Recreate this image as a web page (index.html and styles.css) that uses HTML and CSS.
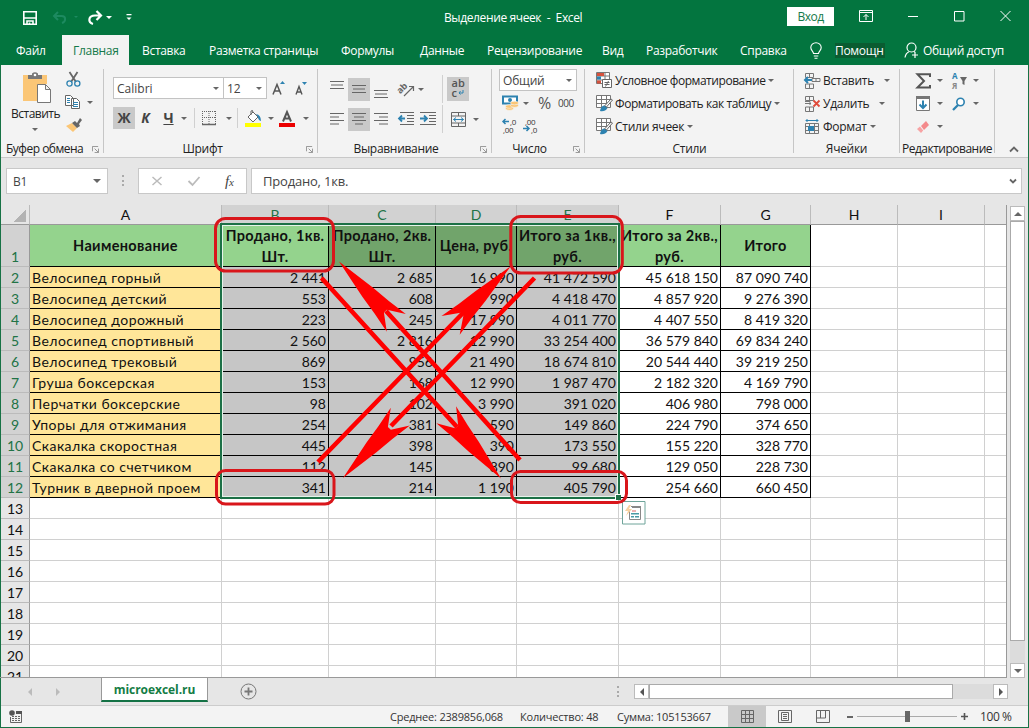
FILE: index.html
```html
<!DOCTYPE html>
<html lang="ru">
<head>
<meta charset="utf-8">
<title>Выделение ячеек - Excel</title>
<link rel="stylesheet" href="styles.css">
</head>
<body>
<div class="window">
  <header class="titlebar">
    <svg class="save" width="16" height="16" viewBox="0 0 16 16" fill="none" stroke="#fff" stroke-width="1.6"><path d="M1.800 1.800h12.400v12.400H1.800zM1.800 8h12.400M5 14v-3h6v3M7.500 14v-1.500"/></svg>
    <svg width="16" height="16" viewBox="0 0 16 16" fill="none" stroke="#1d8a60" stroke-width="2"><path d="M6 2L2 6l4 4M3 6h6.500c5 0 4.500 5.500.5 7"/></svg>
    <i class="caret dim"></i>
    <svg width="17" height="16" viewBox="0 0 17 16" fill="none" stroke="#fff" stroke-width="2.200"><path d="M9.500 1L14 5.500 9.500 10M14 5.500H8C1 5.500.8 12.500 6 14"/></svg>
    <i class="caret white"></i>
    <svg width="8" height="8" viewBox="0 0 8 8" fill="#fff"><path d="M.5 0h5v1.200h-5zM.5 3.500h5L3 6z"/></svg>
    <span class="title">Выделение ячеек&nbsp; -&nbsp; Excel</span>
    <span class="signin">Вход</span>
    <svg width="14" height="12" viewBox="0 0 14 12" fill="none" stroke="#fff"><path d="M.5.5h13v11H.5zM.5 2.500h13M7 10V4.500M4.500 7L7 4.500 9.500 7"/></svg>
    <svg width="10" height="12" viewBox="0 0 10 12" stroke="#fff"><path d="M0 6.500h10"/></svg>
    <svg width="11" height="12" viewBox="0 0 11 12" fill="none" stroke="#fff"><path d="M.5 1.500h9.500V11H.5z"/></svg>
    <svg width="11" height="12" viewBox="0 0 11 12" stroke="#fff"><path d="M.5 1l10 10M10.500 1l-10 10"/></svg>
  </header>

  <nav class="tabs">
    <span>Файл</span><span class="active">Главная</span><span>Вставка</span><span>Разметка страницы</span><span>Формулы</span><span>Данные</span><span>Рецензирование</span><span>Вид</span><span>Разработчик</span><span>Справка</span>
    <svg width="12" height="17" viewBox="0 0 12 17" fill="none" stroke="#fff" stroke-width="1.1"><path d="M3.500 11.500c0-2-2.700-3-2.700-6a5.200 4.800 0 0 1 10.400 0c0 3-2.700 4-2.700 6zM3.800 14h4.500M4.500 16.200h3"/></svg>
    <span class="tell">Помощн</span>
    <svg width="15" height="17" viewBox="0 0 15 17" fill="none" stroke="#fff" stroke-width="1.200"><circle cx="7.500" cy="5.500" r="4.500"/><path d="M1 15.500c.5-3 2-5 4-5.800M10 9.500l1 .8M11 10v6M8 13h6"/></svg>
    <span>Общий доступ</span>
  </nav>

  <section class="ribbon">
    <div class="group clipboard">
      <div class="clip-body">
        <div class="paste">
          <svg width="28" height="31" viewBox="0 0 28 31"><path fill="#fbc676" d="M0 3h5v4h14V3h5v9h-9v17H0z"/><path fill="#777" d="M5 3h4V1.500Q12 -1 15 1.500V3h4v4H5z"/><circle cx="12" cy="3" r="1.300" fill="#fff"/><path fill="#fff" stroke="#777" d="M14.500 12.500h8l5 5v13h-13zM22.500 12.500v5h5"/></svg>
          <span>Вставить</span><i class="caret"></i>
        </div>
        <div class="clip-tools">
          <svg width="15" height="15" viewBox="0 0 15 15" fill="none"><path stroke="#666" stroke-width="1.800" d="M3.500 0L10 10M11.500 0L5 10"/><g stroke="#2d82b0" stroke-width="1.300"><circle cx="3.500" cy="11.500" r="2.600"/><circle cx="11.300" cy="11.500" r="2.600"/></g></svg>
          <div class="copy"><svg width="16" height="15" viewBox="0 0 16 15" fill="#fff" stroke="#666"><path d="M.5.500h5l3 3v7h-8zM6.500 3.500h5l3 3v7h-8z"/><path stroke="#2d82b0" d="M2 3.500h3M2 5.500h3M2 7.500h3M8 7.500h5M8 9.500h5M8 11.500h5"/></svg><i class="caret"></i></div>
          <svg width="16" height="14" viewBox="0 0 16 14"><path fill="#fbc676" d="M0 8l6-3 5 5-4 4z"/><path fill="#666" d="M6 5l3-2 2 2 3-5 2 2-3 4 1 2-3 2z"/></svg>
        </div>
      </div>
      <div class="label tight"><span>Буфер обмена</span><svg class="launch"><use href="#launch"/></svg></div>
    </div>

    <div class="group font">
      <div class="row font-1">
        <div class="combo">Calibri<i class="caret"></i></div><div class="combo size">12<i class="caret"></i></div>
        <svg width="13" height="15" viewBox="0 0 13 15"><path d="M1 13.500L5 3.500l4 10M2.500 10h5" fill="none" stroke="#555" stroke-width="1.500"/><path fill="#2d82b0" d="M8 3h5l-2.500-3z"/></svg>
        <svg width="12" height="15" viewBox="0 0 12 15"><path d="M1 13.500l3-8 3 8M2.200 11h4" fill="none" stroke="#555" stroke-width="1.400"/><path fill="#2d82b0" d="M7 1h5L9.500 4z"/></svg>
      </div>
      <div class="row font-2">
        <b class="on">Ж</b><b><em>К</em></b><b class="under">Ч</b><i class="caret"></i><i class="sep"></i>
        <svg width="14" height="14" viewBox="0 0 14 14" stroke="#666"><path stroke-dasharray="1 1" d="M.5 0v13M13.500 0v13M7 0v13M0 .5h14M0 6.500h14"/><path d="M0 13.500h14" stroke-width="1.500"/></svg><i class="caret"></i><i class="sep"></i>
        <svg width="17" height="17" viewBox="0 0 17 17"><path d="M3 7l5-5 5 5-5 5zM6 5V1q2-2 2 2" fill="#fff" stroke="#666"/><path fill="#2d82b0" d="M11 4q5 1 5 7-3-1-3-4z"/><path fill="#ff0" d="M0 13h16v4H0z"/></svg><i class="caret"></i>
        <svg width="17" height="17" viewBox="0 0 17 17"><path d="M4 11.500L8 2l4 9.500M5.500 8.500h5" fill="none" stroke="#555" stroke-width="2"/><path fill="#ec0000" d="M0 13h16v4H0z"/></svg><i class="caret"></i>
      </div>
      <div class="label"><span>Шрифт</span><svg class="launch"><use href="#launch"/></svg></div>
    </div>

    <div class="group align">
      <div class="row align-1">
        <svg class="up" width="14" height="10"><use href="#l3"/></svg><span class="on"><svg width="14" height="10"><use href="#l3"/></svg></span><svg class="down" width="14" height="10"><use href="#l3"/></svg>
        <svg width="17" height="16" viewBox="0 0 17 16"><text x="0" y="10" transform="rotate(-45 5 9)" class="ab">ab</text><path d="M6 15l9-9M11 5.500h4.500V10" fill="none" stroke="#666" stroke-width="1.200"/></svg><i class="caret"></i><i class="sep tall"></i>
        <svg class="on wrap" width="22" height="24" viewBox="0 0 22 24"><text x="4.500" y="10">ab</text><text x="4.500" y="20">c</text><path d="M16 13v3h-4M13.500 14L12 16l1.500 1.500" fill="none" stroke="#2d82b0"/></svg>
      </div>
      <div class="row align-2">
        <svg width="14" height="12"><use href="#l4"/></svg><span class="on"><svg width="14" height="12" viewBox="0 0 14 12" stroke="#666"><path d="M0 .5h14M2 4h10M0 7.500h14M3 11h8"/></svg></span><svg width="14" height="12" class="mirror"><use href="#l4"/></svg>
        <svg width="16" height="14" viewBox="0 0 16 14"><path d="M2 .5h14M9 3.500h7M9 6.500h7M9 9.500h7M2 12.500h14" stroke="#666"/><path d="M7 6.500H1M4 3.500l-3 3 3 3" fill="none" stroke="#2d82b0" stroke-width="1.800"/></svg>
        <svg width="16" height="14" viewBox="0 0 16 14"><path d="M0 .5h16M9 3.500h7M9 6.500h7M9 9.500h7M0 12.500h16" stroke="#666"/><path d="M0 6.500h6M4 3.500l3 3-3 3" fill="none" stroke="#2d82b0" stroke-width="1.800"/></svg>
        <i class="sep tall"></i>
        <svg width="15" height="15" viewBox="0 0 15 15" fill="none"><path d="M.5.5h14v14H.5zM.5 4h14M.5 11h14M7.500 0v4M7.500 11v4" stroke="#666"/><path d="M2.500 7.500h10M5 5.500l-2.500 2L5 9.500M10 5.500l2.500 2-2.500 2" stroke="#2d82b0"/></svg><i class="caret"></i>
      </div>
      <div class="label"><span>Выравнивание</span><svg class="launch"><use href="#launch"/></svg></div>
    </div>

    <div class="group number">
      <div class="combo">Общий<i class="caret"></i></div>
      <div class="row number-1">
        <svg width="17" height="16" viewBox="0 0 17 16"><path d="M1 1.500h14v7H1z" fill="#fff" stroke="#2d82b0" stroke-width="2"/><circle cx="8" cy="5" r="2" fill="#2d82b0"/><g fill="#fbc676" stroke="#f3f3f3" stroke-width=".6"><ellipse cx="7.500" cy="13.500" rx="4" ry="1.800"/><ellipse cx="7.500" cy="11.500" rx="4" ry="1.800"/><ellipse cx="12.500" cy="10.500" rx="4" ry="1.800"/><ellipse cx="12.500" cy="8" rx="4" ry="1.800"/></g></svg><i class="caret"></i><span class="pct">%</span><span class="zeros">000</span>
      </div>
      <div class="row number-2">
        <svg width="15" height="15" viewBox="0 0 15 15"><path d="M1 3.500h6M3.500 1L1 3.500 3.500 6" fill="none" stroke="#2d82b0" stroke-width="1.500"/><text x="8" y="7" class="dec">,0</text><text x="1" y="15" class="dec">,00</text></svg>
        <svg width="15" height="15" viewBox="0 0 15 15"><path d="M0 10.500h6M3.500 8L6 10.500 3.500 13" fill="none" stroke="#2d82b0" stroke-width="1.500"/><text x="2" y="7" class="dec">,00</text><text x="8" y="15" class="dec">,0</text></svg>
      </div>
      <div class="label"><span>Число</span><svg class="launch"><use href="#launch"/></svg></div>
    </div>

    <div class="group styles">
      <div class="cmd cond"><svg width="17" height="17" viewBox="0 0 17 17"><path fill="#fff" stroke="#777" d="M.5.5h13v11H.5zM.5 4h13M.5 8h13M9 .5v11"/><path fill="#d5513c" d="M1 1h7v3H1zM1 8.500h4v3H1z"/><path fill="#2d82b0" d="M1 4.500h4v3H1z"/><path fill="#fff" stroke="#666" d="M6.500 7.500h9v8h-9zM8.500 10.500h5M8.500 12.500h5M12.500 9l-3 5.500"/></svg><span>Условное форматирование</span><i class="caret"></i></div>
      <div class="cmd table"><svg width="17" height="17"><use href="#tbl"/></svg><span>Форматировать как таблицу</span><i class="caret"></i></div>
      <div class="cmd"><svg width="17" height="17"><use href="#tbl"/></svg><span>Стили ячеек</span><i class="caret"></i></div>
      <div class="label"><span>Стили</span></div>
    </div>

    <div class="group cells">
      <div class="cmd"><svg width="17" height="16" viewBox="0 0 17 16" fill="none" stroke="#777"><path d="M1.500.5h8v4h-8zM5.500.5v4M1.500 11h8v4.500h-8zM5.500 11v4.500M8 5.500h8v3H8zM12 5.500v3"/><path stroke="#2d82b0" stroke-width="2" d="M8 7H1M4 4L1 7l3 3"/></svg><span>Вставить</span><i class="caret far"></i></div>
      <div class="cmd"><svg width="17" height="16" viewBox="0 0 17 16" fill="none" stroke="#777"><path d="M1.500.5h8v4h-8zM5.500.5v4M1.500 11h8v4.500h-8zM5.500 11v4.500M1 7.500h6M1 5.500h5v3.500"/><path stroke="#e04b3a" stroke-width="1.800" d="M9.500 4.500l6 6M15.500 4.500l-6 6"/></svg><span>Удалить</span><i class="caret far"></i></div>
      <div class="cmd"><svg width="17" height="16" viewBox="0 0 17 16" fill="none"><path stroke="#777" d="M1.500 4.500h13v10h-13zM1.500 7.500h13M1.500 11.500h13M5.500 4v11M10.500 4v11"/><path fill="#2d82b0" d="M4 7h6v5H4z"/><path stroke="#2d82b0" d="M2 1.500h12M3.500 0L2 1.500 3.500 3M12.500 0L14 1.500 12.500 3"/></svg><span>Формат</span><i class="caret"></i></div>
      <div class="label"><span>Ячейки</span></div>
    </div>

    <div class="group edit">
      <div class="row edit-row"><svg width="15" height="16" viewBox="0 0 15 16"><path d="M14 4V1.200H1.500L8 8l-6.500 6.500H14V12" fill="none" stroke="#555" stroke-width="2"/></svg><i class="caret"></i>
        <svg width="17" height="17" viewBox="0 0 17 17"><text x="0" y="7" class="az">А</text><text x="0" y="16.500" class="ya">Я</text><path fill="#666" d="M8 5h7l-2.500 4v4l-2-1V9z"/></svg><i class="caret"></i></div>
      <div class="row edit-row"><svg width="14" height="15" viewBox="0 0 14 15"><path fill="#fff" stroke="#777" d="M.5.5h13v14H.5z"/><path fill="#777" d="M0 0h14v3H0z"/><path fill="none" stroke="#2d82b0" stroke-width="2" d="M7 4.500V12M3.500 8.500L7 12l3.500-3.500"/></svg><i class="caret"></i>
        <svg width="14" height="14" viewBox="0 0 14 14"><circle cx="8.500" cy="5" r="3.700" fill="#fff" stroke="#2d82b0" stroke-width="1.600"/><path d="M6 8l-5 5" stroke="#2d82b0" stroke-width="2.300"/></svg><i class="caret"></i></div>
      <div class="row edit-row"><svg width="14" height="14" viewBox="0 0 14 14"><path fill="#f48a8c" d="M5 6l5-5 3 4-5 5z"/><path fill="#f7a3a4" d="M1 9l3-2.500 3.200 4L5 13z"/></svg><i class="caret"></i></div>
      <div class="label tight"><span>Редактирование</span></div>
    </div>
    <svg class="collapse" width="10" height="7" viewBox="0 0 10 7"><path d="M1 5.500L5 1.500l4 4" fill="none" stroke="#666" stroke-width="1.800"/></svg>
  </section>

  <section class="formula">
    <div class="namebox">B1<i class="caret big"></i></div>
    <div class="dots"></div>
    <div class="fx">
      <svg width="12" height="12" viewBox="0 0 12 12" stroke="#bbb" stroke-width="1.500"><path d="M1.500 2l9 8M10.500 2l-9 8"/></svg>
      <svg width="14" height="12" viewBox="0 0 14 12" fill="none" stroke="#bbb" stroke-width="1.800"><path d="M1.500 6l4 4 7-8"/></svg>
      <em>f<small>x</small></em>
    </div>
    <div class="content">Продано, 1кв.<svg width="8" height="7" viewBox="0 0 8 7"><path d="M1 1.500l3 3 3-3" fill="none" stroke="#666" stroke-width="1.800"/></svg></div>
  </section>

  <main class="work">
    <div class="sheet">
      <div class="grid" id="grid"></div>
      <div class="selection"><i class="handle"></i></div>
      <svg class="quick" width="24" height="24" viewBox="0 0 24 24"><path fill="#fff" stroke="#6fa49a" d="M.5.5h22.500v22.500H.5z"/><path fill="none" stroke="#888" d="M9 5.500h9.500M7.500 9v9.500h11V5"/><path stroke="#888" stroke-width="2" d="M10 6h8"/><path stroke="#d66" d="M10 10h4"/><path stroke="#4a9aa5" stroke-width="1.500" d="M9 12.800h8M9 15.800h3M13 15.800h4"/><path fill="#f7d2a0" d="M7 4L3 10h3l-2 5 6-7H7l2-4z"/></svg>
      <svg class="marks" width="1006" height="472" viewBox="0 205 1006 472">
        <g fill="none" stroke="#d9161b" stroke-width="3"><rect x="215.500" y="218.500" width="118" height="52.500" rx="10"/><rect x="510.800" y="216.500" width="111.500" height="56.500" rx="10"/><rect x="216.500" y="470.500" width="117.500" height="33.500" rx="9"/><rect x="511.500" y="471.500" width="115" height="31" rx="9"/></g>
        <g stroke="#f00" stroke-width="4.600"><path d="M321.500 278L457 427M520 460L386 311M318 462L463 313M534.500 278L391 426"/></g>
        <g fill="#f00"><use href="#head" transform="translate(339 261.500) rotate(47)"/><use href="#head" transform="translate(501 478.500) rotate(229.300)"/><use href="#head" transform="translate(510.500 266.500) rotate(135.500)"/><use href="#head" transform="translate(343 478) rotate(-47)"/></g>
      </svg>
    </div>
    <div class="vscroll"><div class="btn"><i class="tri up"></i></div><div class="thumb"></div><div class="track"></div><div class="btn"><i class="tri dn"></i></div></div>
  </main>

  <section class="sheets">
    <i class="tri lt pale"></i><i class="tri rt pale"></i>
    <span class="tab">microexcel.ru</span>
    <svg width="17" height="17" viewBox="0 0 17 17" fill="none" stroke="#777"><circle cx="8.500" cy="8.500" r="7.500"/><path stroke-width="1.800" d="M8.500 4.500v8M4.500 8.500h8"/></svg>
    <div class="dots"></div>
    <div class="hscroll"><div class="btn"><i class="tri lt"></i></div><div class="thumb"></div><div class="track"></div><div class="btn"><i class="tri rt"></i></div></div>
  </section>

  <footer class="status">
    <svg width="13" height="13" viewBox="0 0 13 13"><circle cx="3" cy="3" r="2.800" fill="#555"/><path fill="#555" d="M7 1h6v3H7z"/><path fill="none" stroke="#666" d="M1.500 7v5.500h11V4"/><path stroke="#666" stroke-dasharray="2 1" d="M3 6.500h8M3 8.500h8M3 10.500h8"/></svg>
    <span class="s1">Среднее: 2389856,068</span><span class="s2">Количество: 48</span><span class="s3">Сумма: 105153667</span>
    <div class="view on"><svg width="13" height="13" viewBox="0 0 13 13" fill="none" stroke="#666"><path d="M.5.5h12v12H.5zM4.500 0v13M8.500 0v13M0 4.500h13M0 8.500h13"/></svg></div>
    <div class="view"><svg width="14" height="13" viewBox="0 0 14 13" fill="none" stroke="#666"><path d="M.5.5h13v12H.5zM3.500 2.500h7v8h-7zM5 4.500h4M5 6.500h4M5 8.500h4"/></svg></div>
    <div class="view"><svg width="14" height="13" viewBox="0 0 14 13" fill="none" stroke="#666"><path d="M.5.5h13v12H.5zM4.500 0v8M9.500 0v8M.5 8h9"/></svg></div>
    <i class="minus"></i>
    <div class="slider"><i></i></div>
    <svg width="7" height="7" viewBox="0 0 7 7" stroke="#555" stroke-width="1.600"><path d="M0 3.500h7M3.500 0v7"/></svg>
    <span class="zoom">100 %</span>
  </footer>
</div>

<svg class="defs" width="0" height="0">
  <symbol id="launch" viewBox="0 0 8 8"><path d="M.5 6V.5H7M7.500 3v4.500H3M3 3l4 4" fill="none" stroke="#888"/></symbol>
  <symbol id="l3" viewBox="0 0 14 10"><path d="M0 1.500h14M1 5h12M0 8.500h14" stroke="#666"/></symbol>
  <symbol id="l4" viewBox="0 0 14 12"><path d="M0 .5h14M0 4h9M0 7.500h14M0 11h9" stroke="#666"/></symbol>
  <symbol id="tbl" viewBox="0 0 17 17"><path fill="#fff" stroke="#777" d="M.5.5h14v12H.5zM.5 4.500h14M.5 8.500h14M5.500.5v12M10.500.5v12"/><path fill="#fff" stroke="#666" d="M15 4l1.500 1-6 7-2-1z"/><path fill="#2d82b0" d="M4 16q1-5 4-5.500l3.500 2.500Q9 17 4 16z"/></symbol>
  <defs><path id="head" d="M0 0L42 -7Q62 -9 84 -13L68 -2V2L84 13Q62 9 42 7z"/></defs>
</svg>
<script src="script.js"></script>
</body>
</html>
```

FILE: styles.css
```css
* { box-sizing: border-box; }
body { margin: 0; overflow: hidden; font: 12px "Open Sans", "Noto Sans", sans-serif; color: #222; }
svg { display: block; overflow: visible; }
span { white-space: nowrap; }
.defs { position: absolute; }
.window { width: 1029px; height: 728px; display: flex; flex-direction: column; background: #e6e6e6; border: solid #177245; border-width: 0 1px 1px; }

.caret { border: 3px solid transparent; border-top-color: #666; border-bottom: 0; width: 6px; height: 3px; flex: none; }
.caret.white { border-top-color: #fff; }
.caret.dim { border-top-color: #1d8a60; border-width: 2px 2px 0; width: 4px; }
.caret.big { border-width: 4px 4px 0; width: 8px; height: 4px; }
.tri { border: 4px solid transparent; width: 0; height: 0; }
.tri.up { border-bottom-color: #666; border-top: 0; }
.tri.dn { border-top-color: #666; border-bottom: 0; }
.tri.lt { border-right-color: #555; border-left: 0; }
.tri.rt { border-left-color: #555; border-right: 0; }
.tri.rt.pale { border-left-color: #bbb; }
.tri.lt.pale { border-right-color: #bbb; }

.titlebar, .tabs { margin: 0 -1px; background: #03753f; color: #fff; display: grid; align-items: center; flex: none; }
.titlebar { height: 35px; grid-template-columns: 30px 22px 13px 19px 20px 318px 343px 72px 49px 46px 46px 29px; padding-left: 22px; }
.title { letter-spacing: -.38px; }
.signin { width: 47px; height: 19px; margin-top: -2px; background: #fff; color: #14794a; text-align: center; line-height: 19px; letter-spacing: -.5px; }
.titlebar > svg:nth-last-child(-n+4) { margin-top: -3px; }
.tabs { height: 30px; letter-spacing: -.3px; grid-template-columns: 46px 67px 13px 67px 132px 79px 67px 115px 44px 94px 70px 25px 69px 19px 1fr; padding-left: 16px; }
.tabs .active { background: #f3f3f3; color: #14794a; height: 30px; line-height: 31px; padding-left: 11px; grid-column: 2 / 4; width: 67px; }
.tell { background: #0a5c31; width: 50px; height: 15px; line-height: 15px; }

.ribbon { height: 93px; background: #f3f3f3; border-bottom: 1px solid #c8c8c8; display: flex; flex: none; }
.group { border-right: 1px solid #c6c6c6; margin: 4px 0; display: flex; flex-direction: column; flex: none; }
.label { margin: auto 0 -4px; height: 17px; display: flex; align-items: center; justify-content: center; letter-spacing: -.3px; position: relative; flex: none; }
.label.tight { letter-spacing: -.5px; }
.launch { position: absolute; right: 4px; bottom: 4px; width: 7px; height: 7px; }
.row { display: grid; align-items: center; flex: none; }
.on { background: #c9c9c9; }
.sep { width: 1px; height: 20px; background: #d0d0d0; }
.combo { height: 22px; background: #fff; border: 1px solid #c3c3c3; display: flex; align-items: center; justify-content: space-between; padding: 0 4px 0 3px; color: #444; flex: none; }

.clipboard { width: 104px; margin-left: -1px; padding-left: 1px; }
.clipboard .label { justify-content: flex-start; padding-left: 5px; }
.clip-body { display: flex; }
.paste { width: 64px; padding: 3px 0 0 10px; display: flex; flex-direction: column; }
.paste svg { margin-left: 12px; }
.paste span { margin: 3px 0 0; line-height: 16px; letter-spacing: -.5px; }
.paste .caret { margin: 6px 0 0 21px; }
.clip-tools { padding: 3px 0 0; display: flex; flex-direction: column; gap: 8px; }
.clip-tools > svg { margin-left: 1px; }
.copy { display: flex; align-items: center; gap: 6px; }
.font { width: 214px; padding: 8px 0 0 9px; }
.font .label > span { margin-right: 25px; }
.font-1 { grid-template-columns: 110px 43px 23px 20px; height: 22px; }
.font-1 > svg { margin-left: 6px; }
.font-1 .combo { margin-right: -1px; }
.font-2 { margin-top: 8px; height: 22px; grid-template-columns: 22px 21px 25px 13px 8px 24px 11px 8px 23px 11px 24px 10px; font-size: 14px; color: #444; }
.font-2 b { text-align: center; line-height: 22px; }
.font-2 .under { text-decoration: underline; }
.align { width: 174px; padding: 6px 0 0 12px; }
.align .label > span { margin-right: 29px; }
.align-1 { height: 24px; grid-template-columns: 18px 26px 24px 20px 24px 5px 22px; }
.align-1 span.on, .align-2 .on { width: 22px; height: 23px; display: grid; place-items: center; }
.align-1 .up { margin-top: -8px; }
.align-1 .down { margin-top: 9px; }
.ab { font-size: 9px; font-weight: bold; fill: #666; }
.wrap text { font-size: 11px; font-weight: 600; fill: #555; }
.align-2 { grid-template-columns: 18px 26px 24px 22px 22px 9px 22px 8px; height: 24px; margin-top: 6px; }
.sep.tall { height: 28px; }
.mirror { transform: scaleX(-1); }
.number { width: 93px; padding-left: 7px; }
.number .label > span { margin-right: 24px; }
.number .combo { width: 78px; letter-spacing: -.2px; }
.number-1 { grid-template-columns: 21px 15px 20px 1fr; height: 24px; padding-left: 3px; }
.pct { font-size: 16px; color: #555; line-height: 20px; }
.zeros { font-size: 10px; color: #444; letter-spacing: -.5px; }
.number-2 { grid-template-columns: 21px 1fr; padding-left: 3px; margin-top: 3px; }
.dec { font: 8px "Open Sans", sans-serif; fill: #333; letter-spacing: -.3px; }
.styles { width: 209px; padding-left: 11px; }
.styles .label > span { margin-right: 10px; }
.cmd { height: 23px; display: flex; align-items: center; letter-spacing: -.25px; flex: none; }
.cmd.cond { letter-spacing: -.45px; }
.cmd.table { letter-spacing: -.42px; }
.cmd svg { flex: none; margin-right: 2px; }
.cmd .caret { margin-left: 3px; }
.cmd .caret.far { margin-left: 10px; }
.cells { width: 106px; padding-left: 10px; }
.cells .label > span { margin-right: 10px; }
.edit { width: 95px; }
.edit-row { grid-template-columns: 21px 15px 21px 1fr; padding-left: 16px; height: 23px; }
.az, .ya { font: bold 8px "Open Sans", sans-serif; fill: #2d82b0; }
.ya { fill: #888; }
.collapse { align-self: flex-end; margin: 0 0 4px 14px; }

.formula { height: 47px; flex: none; padding: 10px 6px 11px 5px; display: flex; font-size: 13px; letter-spacing: -.3px; color: #444; }
.formula > div:not(.dots) { background: #fff; border: 1px solid #c8c8c8; display: flex; align-items: center; }
.namebox { width: 102px; padding: 0 6px; justify-content: space-between; font-size: 12px; }
.dots { width: 2px; height: 11px; background: repeating-linear-gradient(#aaa 0 2px, transparent 2px 4.500px); }
.formula .dots { margin: 7px 14px 0 14px; }
.fx { width: 109px; padding-left: 12px; gap: 24px; }
.fx em { font: italic 15px "Liberation Serif", serif; color: #444; }
.fx small { font-size: 11px; }
.formula > .content { flex: 1; margin-left: 4px; padding: 0 4px 0 11px; justify-content: space-between; letter-spacing: -.2px; }

.work { display: flex; height: 473px; flex: none; }
.sheet { width: 1007px; height: 473px; margin-left: -1px; position: relative; overflow: hidden; padding-left: 1px; border: solid #999; border-width: 0 1px 1px 0; flex: none; }
.grid { display: grid; grid-template-columns: 29px 192px 107px 107px 81px 102px 102px 90px 87px 87px 22px; grid-template-rows: 20px 42px; grid-auto-rows: 21px; font: 14px Lato, "Open Sans", sans-serif; color: #111; }
.cell { background: #fff; border: solid #d0d0d0; border-width: 0 1px 1px 0; white-space: nowrap; line-height: 21px; overflow: hidden; }
.col, .num { background: #e6e6e6; text-align: center; border-color: #bbb; line-height: 20px; }
.col { border-bottom-color: #999; }
.num { border-right-color: #999; display: flex; align-items: flex-end; justify-content: center; line-height: 18px; }
.picked { background: #d2d2d2; color: #217346; }
.corner { background: linear-gradient(135deg, transparent 50%, #b3b3b3 50%) 13px 5px / 12px 12px no-repeat #e6e6e6; }
.data { border-color: #000; text-align: right; padding-right: 2px; }
.name { background: #ffe699; text-align: left; padding-left: 2px; letter-spacing: .46px; }
.shade { background: #c6c6c6; }
.head { background: #94d38d; text-align: center; font-size: 14.5px; font-weight: bold; padding: 0; display: grid; place-content: center; letter-spacing: .35px; }
.head.shade { background: #71a46b; }
.selection { position: absolute; left: 220px; top: 18px; width: 400px; height: 276px; border: 2px solid #1c7046; box-shadow: inset 0 0 0 1px #e6f3ea; }
.handle { position: absolute; right: -3px; bottom: -3px; width: 6px; height: 6px; background: #1c7046; border: solid #fff; border-width: 1px 0 0 1px; }
.quick { position: absolute; left: 622px; top: 296px; }
.marks { position: absolute; left: 0; top: 0; }
.vscroll { margin: 1px 0 0 3px; width: 15px; display: flex; flex-direction: column; }
.btn { background: #fff; border: 1px solid #bbb; width: 15px; height: 15px; display: grid; place-items: center; flex: none; }
.thumb { background: #fff; border: 1px solid #aaa; }
.track { background: #dcdcdc; flex: 1; }
.vscroll .thumb { height: 420px; }

.sheets { height: 28px; flex: none; display: flex; align-items: center; border-bottom: 1px solid #ccc; }
.sheets > .tri:first-child { margin-left: 27px; }
.sheets > .tri.rt { margin-left: 24px; }
.tab { margin: -2px 32px 0 41px; align-self: flex-start; width: 107px; height: 26px; background: #fff; border: solid #999; border-width: 0 1px; border-bottom: 2px solid #147245; color: #147d45; font-weight: bold; text-align: center; line-height: 28px; letter-spacing: -.05px; }
.sheets .dots { margin-left: 360px; }
.hscroll { margin-left: 15px; display: flex; width: 374px; }
.hscroll .thumb { width: 304px; }

.status { height: 21px; background: #f3f3f3; display: flex; align-items: center; font-size: 11px; letter-spacing: -.2px; color: #333; flex: none; }
.status > svg:first-child { margin-left: 8px; }
.s1 { width: 130px; margin-left: 368px; }
.s2 { width: 97px; }
.s3 { width: 111px; }
.view { width: 38px; height: 21px; display: grid; place-items: center; }
.minus { width: 6px; height: 2px; background: #666; margin-left: 5px; }
.slider { width: 100px; height: 1px; background: #aaa; margin: 0 4px 0 4px; }
.slider i { display: block; width: 5px; height: 11px; margin: -5px 0 0 48px; background: #666; }
.zoom { margin-left: 12px; font-size: 12px; letter-spacing: -.4px; }
```

FILE: script.js
```javascript
const heads = ['Наименование', 'Продано, 1кв.<br>Шт.', 'Продано, 2кв.<br>Шт.', 'Цена, руб.', 'Итого за 1кв.,<br>руб.', 'Итого за 2кв.,<br>руб.', 'Итого'];
const rows = [
  ['Велосипед горный', '2 441', '2 685', '16 990', '41 472 590', '45 618 150', '87 090 740'],
  ['Велосипед детский', '553', '608', '990', '4 418 470', '4 857 920', '9 276 390'],
  ['Велосипед дорожный', '223', '245', '17 990', '4 011 770', '4 407 550', '8 419 320'],
  ['Велосипед спортивный', '2 560', '2 816', '12 990', '33 254 400', '36 579 840', '69 834 240'],
  ['Велосипед трековый', '869', '956', '21 490', '18 674 810', '20 544 440', '39 219 250'],
  ['Груша боксерская', '153', '168', '12 990', '1 987 470', '2 182 320', '4 169 790'],
  ['Перчатки боксерские', '98', '102', '3 990', '391 020', '406 980', '798 000'],
  ['Упоры для отжимания', '254', '381', '590', '149 860', '224 790', '374 650'],
  ['Скакалка скоростная', '445', '398', '390', '173 550', '155 220', '328 770'],
  ['Скакалка со счетчиком', '112', '145', '890', '99 680', '129 050', '228 730'],
  ['Турник в дверной проем', '341', '214', '1 190', '405 790', '254 660', '660 450'],
];

const grid = document.getElementById('grid');
function add(cls, html = '') {
  const el = document.createElement('div');
  el.className = 'cell ' + cls;
  el.innerHTML = html;
  grid.append(el);
}

add('col corner');
[...'ABCDEFGHI'].forEach((c, i) => add(i > 0 && i < 5 ? 'col picked' : 'col', c));
add('col');

for (let r = 1; r <= 21; r++) {
  add(r <= 12 ? 'num picked' : 'num', r);
  for (let c = 0; c < 10; c++) {
    if (r > 12 || c > 6) { add(''); continue; }
    const shade = c > 0 && c < 5 && !(r === 1 && c === 1) ? ' shade' : '';
    if (r === 1) add('data head' + shade, `<div>${heads[c]}</div>`);
    else add('data' + (c === 0 ? ' name' : '') + shade, rows[r - 2][c]);
  }
}
```
